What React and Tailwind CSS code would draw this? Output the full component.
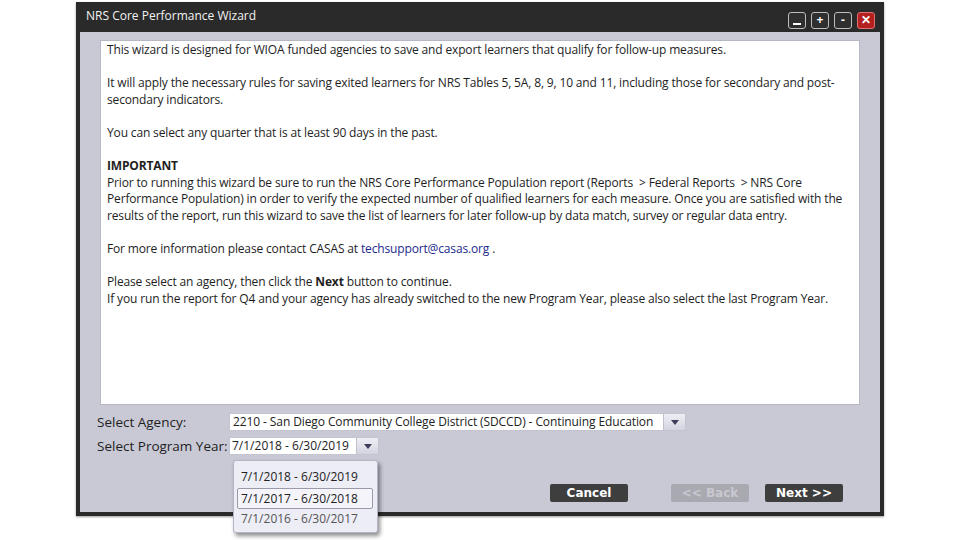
import React from 'react';

const font = { fontFamily: '"Open Sans", "Noto Sans", sans-serif' };

const WinButton = ({ children, close }) => (
  <div
    className={`w-[18px] h-[17px] rounded-[3px] border flex items-center justify-center text-white text-[12px] font-bold leading-none ${
      close ? 'bg-[#b3201f] border-[#e07070]' : 'bg-[#2f2f2f] border-[#bdbdbd]'
    }`}
  >
    {children}
  </div>
);

const Arrow = () => (
  <div className="w-[22px] h-full bg-gradient-to-b from-[#eeeef4] to-[#d4d4e0] border-l border-[#c0c0cc] flex items-center justify-center">
    <svg width="8" height="5" viewBox="0 0 8 5">
      <path d="M0 0 L8 0 L4 5 Z" fill="#3c3c5a" />
    </svg>
  </div>
);

const WizButton = ({ children, disabled }) => (
  <div
    className={`w-[78px] h-[18px] rounded-[2px] flex items-center justify-center text-[12px] font-bold ${
      disabled ? 'bg-[#a9a9b1] text-[#c8c8d0]' : 'bg-[#3e3e3e] text-white'
    }`}
    style={{ fontFamily: '"DejaVu Sans", sans-serif' }}
  >
    {children}
  </div>
);

export default function App() {
  return (
    <div className="w-[960px] h-[540px] bg-white relative overflow-hidden" style={font}>
      <div className="ml-[76px] mt-[2px] w-[808px] h-[514px] bg-[#2a2a2a] px-[4px] pb-[4px] flex flex-col shadow-[0_1px_2px_rgba(0,0,0,0.4)]">
        <div className="h-[30px] flex items-center justify-between pl-[6px] pr-[5px]">
          <span className="text-[12px] text-[#f2f2f2] -mt-[2px]">NRS Core Performance Wizard</span>
          <div className="flex gap-[5px] mt-[6px]">
            <WinButton>
              <span className="block w-[8px] h-[2px] bg-white mt-[7px]" />
            </WinButton>
            <WinButton>+</WinButton>
            <WinButton>-</WinButton>
            <WinButton close>
              <span className="text-[12px]">✕</span>
            </WinButton>
          </div>
        </div>
        <div className="flex-1 bg-[#c9c9d6] px-[20px] pt-[8px] flex flex-col">
          <div className="h-[365px] bg-white border border-[#b8b8c4] pl-[6px] pt-[1px] text-[12px] leading-[16.6px] tracking-[-0.15px] text-[#1e1e1e] whitespace-nowrap">
            <p>This wizard is designed for WIOA funded agencies to save and export learners that qualify for follow-up measures.</p>
            <p className="mt-[16.6px]">
              It will apply the necessary rules for saving exited learners for NRS Tables 5, 5A, 8, 9, 10 and 11, including those for secondary and post-
              <br />
              secondary indicators.
            </p>
            <p className="mt-[16.6px]">You can select any quarter that is at least 90 days in the past.</p>
            <p className="mt-[16.6px] font-bold">IMPORTANT</p>
            <p>
              Prior to running this wizard be sure to run the NRS Core Performance Population report (Reports&nbsp; &gt; Federal Reports&nbsp; &gt; NRS Core
              <br />
              Performance Population) in order to verify the expected number of qualified learners for each measure. Once you are satisfied with the
              <br />
              results of the report, run this wizard to save the list of learners for later follow-up by data match, survey or regular data entry.
            </p>
            <p className="mt-[16.6px]">
              For more information please contact CASAS at <span className="text-[#1c2a8c]">techsupport@casas.org</span> .
            </p>
            <p className="mt-[16.6px]">
              Please select an agency, then click the <span className="font-bold">Next</span> button to continue.
              <br />
              If you run the report for Q4 and your agency has already switched to the new Program Year, please also select the last Program Year.
            </p>
          </div>
          <div className="mt-[8px] -ml-[3px] flex items-center h-[18px]">
            <span className="w-[132px] text-[13.5px] text-[#1e1e1e]">Select Agency:</span>
            <div className="flex h-[18px] border border-[#c4c4d0] bg-white">
              <div className="w-[433px] pl-[3px] text-[12px] leading-[16px] text-[#222] tracking-[-0.1px] overflow-hidden whitespace-nowrap">
                2210 - San Diego Community College District (SDCCD) - Continuing Education
              </div>
              <Arrow />
            </div>
          </div>
          <div className="mt-[6px] -ml-[3px] flex items-center h-[18px]">
            <span className="w-[132px] text-[13.5px] text-[#1e1e1e] whitespace-nowrap">Select Program Year:</span>
            <div className="flex h-[18px] border border-[#c4c4d0] bg-white">
              <div className="w-[126px] pl-[2px] text-[12px] leading-[16px] text-[#222] whitespace-nowrap">7/1/2018 - 6/30/2019</div>
              <Arrow />
            </div>
          </div>
          <div className="mt-[29px] flex justify-end pr-[17px]">
            <WizButton>Cancel</WizButton>
            <div className="ml-[43px]">
              <WizButton disabled>&lt;&lt; Back</WizButton>
            </div>
            <div className="ml-[16px]">
              <WizButton>Next &gt;&gt;</WizButton>
            </div>
          </div>
        </div>
      </div>
      <div className="absolute left-[233px] top-[460px] w-[145px] h-[73px] bg-[#ededf5] border border-[#b4b4c4] rounded-[3px] shadow-[2px_3px_4px_rgba(0,0,0,0.45)] pt-[6px] px-[3px] text-[12px] text-[#222]">
        <div className="h-[20px] leading-[20px] pl-[4px]">7/1/2018 - 6/30/2019</div>
        <div className="h-[21px] leading-[19px] pl-[3px] mt-[1px] border border-[#9a9aaa] rounded-[2px] bg-[#f4f4fa] w-[136px]">7/1/2017 - 6/30/2018</div>
        <div className="h-[20px] leading-[20px] pl-[4px] text-[#555]">7/1/2016 - 6/30/2017</div>
      </div>
    </div>
  );
}
